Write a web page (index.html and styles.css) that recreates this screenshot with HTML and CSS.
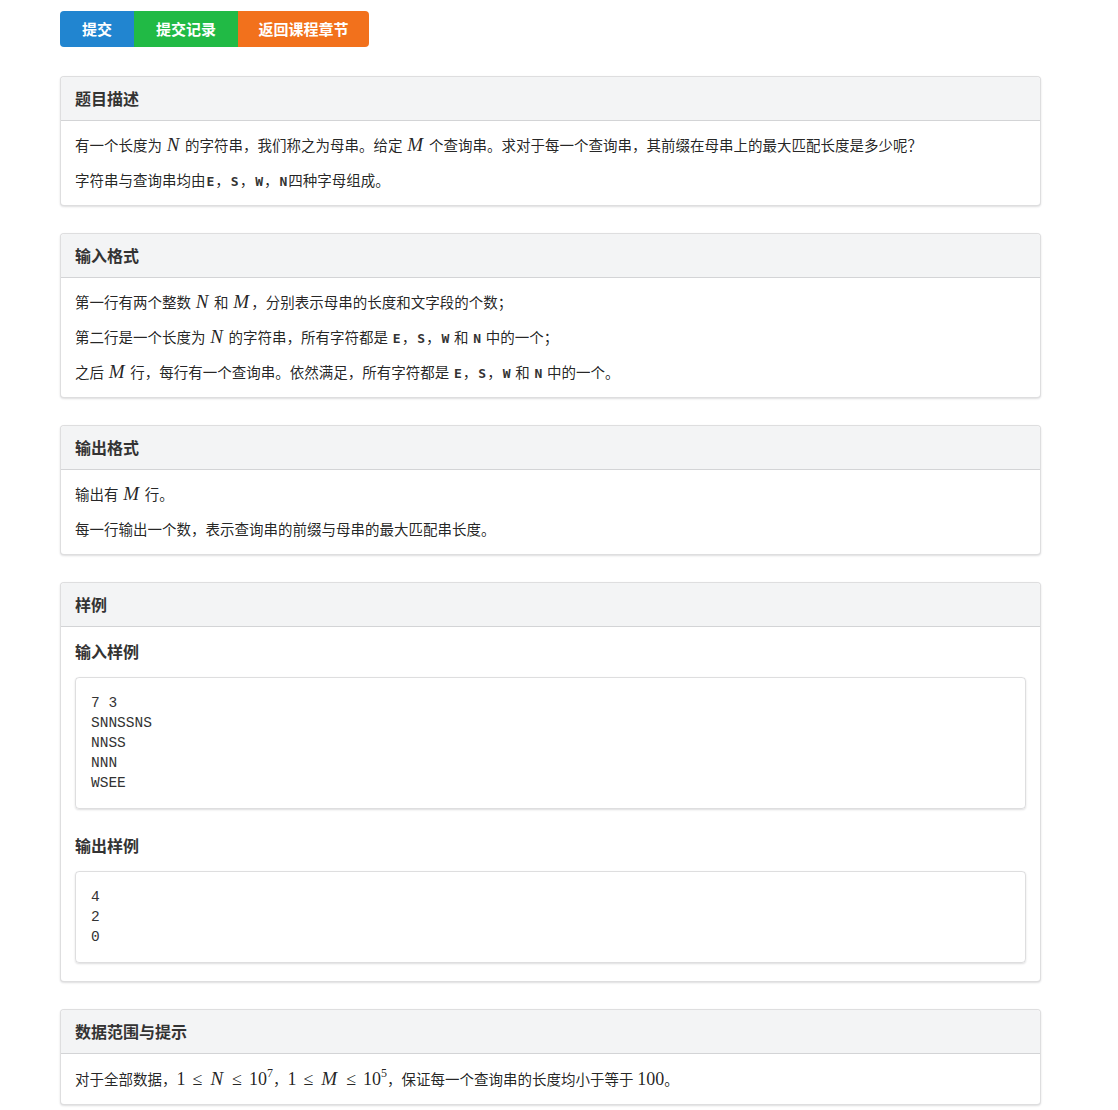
FILE: index.html
```html
<!DOCTYPE html>
<html lang="zh">
<head>
<meta charset="utf-8">
<title>题目</title>
<link rel="stylesheet" href="styles.css">
</head>
<body>
<div class="page">
  <div class="btn-group">
    <a class="btn btn-blue">提交</a>
    <a class="btn btn-green">提交记录</a>
    <a class="btn btn-orange">返回课程章节</a>
  </div>

  <div class="card">
    <div class="card-head">题目描述</div>
    <div class="card-body">
      <p>有一个长度为 <span class="m">N</span> 的字符串，我们称之为母串。给定 <span class="m">M</span> 个查询串。求对于每一个查询串，其前缀在母串上的最大匹配长度是多少呢？</p>
      <p>字符串与查询串均由<code>E</code>，<code>S</code>，<code>W</code>，<code>N</code>四种字母组成。</p>
    </div>
  </div>

  <div class="card">
    <div class="card-head">输入格式</div>
    <div class="card-body">
      <p>第一行有两个整数 <span class="m">N</span> 和 <span class="m">M</span>，分别表示母串的长度和文字段的个数；</p>
      <p>第二行是一个长度为 <span class="m">N</span> 的字符串，所有字符都是 <code>E</code>，<code>S</code>，<code>W</code> 和 <code>N</code> 中的一个；</p>
      <p>之后 <span class="m">M</span> 行，每行有一个查询串。依然满足，所有字符都是 <code>E</code>，<code>S</code>，<code>W</code> 和 <code>N</code> 中的一个。</p>
    </div>
  </div>

  <div class="card">
    <div class="card-head">输出格式</div>
    <div class="card-body">
      <p>输出有 <span class="m">M</span> 行。</p>
      <p>每一行输出一个数，表示查询串的前缀与母串的最大匹配串长度。</p>
    </div>
  </div>

  <div class="card">
    <div class="card-head">样例</div>
    <div class="card-body sample">
      <h4 class="sample-title">输入样例</h4>
      <pre class="sample-box">7 3
SNNSSNS
NNSS
NNN
WSEE</pre>
      <h4 class="sample-title">输出样例</h4>
      <pre class="sample-box">4
2
0</pre>
    </div>
  </div>

  <div class="card">
    <div class="card-head">数据范围与提示</div>
    <div class="card-body tall">
      <p>对于全部数据，<span class="r">1</span><span class="r rel">≤</span><span class="m">N</span><span class="r rel">≤</span><span class="r">10<sup>7</sup></span>，<span class="r">1</span><span class="r rel">≤</span><span class="m">M</span><span class="r rel">≤</span><span class="r">10<sup>5</sup></span>，保证每一个查询串的长度均小于等于 <span class="r">100</span>。</p>
    </div>
  </div>
</div>
</body>
</html>
```

FILE: styles.css
```css
html, body {
  margin: 0;
  padding: 0;
  background: #ffffff;
}

body {
  font-family: "Lato", "Noto Sans CJK SC", sans-serif;
  font-size: 14.5px;
  color: rgba(0, 0, 0, 0.87);
}

.page {
  width: 981px;
  margin-left: 60px;
  padding-top: 11px;
}

.btn-group {
  display: inline-flex;
  border-radius: 4px;
  overflow: hidden;
  margin-bottom: 29px;
}

.btn {
  display: block;
  height: 36px;
  line-height: 36px;
  padding: 0 22px;
  font-size: 15px;
  font-weight: bold;
  color: #ffffff;
  text-decoration: none;
}

.btn-blue { background: #2185d0; }
.btn-green { background: #21ba45; }
.btn-orange { background: #f2711c; padding: 0 20.5px; }

.card {
  border: 1px solid rgba(34, 36, 38, 0.15);
  border-radius: 4px;
  box-shadow: 0 1px 2px 0 rgba(34, 36, 38, 0.15);
  margin-bottom: 27px;
  background: #ffffff;
}

.card-head {
  background: #f3f4f5;
  border-bottom: 1px solid rgba(34, 36, 38, 0.15);
  border-radius: 4px 4px 0 0;
  padding: 10px 14px 9px;
  line-height: 24px;
  font-size: 16px;
  font-weight: bold;
  color: #333333;
}

.card-body {
  padding: 13px 14px 12px;
}

.card-body p {
  margin: 0 0 11px;
  line-height: 24px;
}

.card-body p:last-child {
  margin-bottom: 0;
}

.m {
  font-family: "Liberation Serif", "DejaVu Serif", serif;
  font-style: italic;
  font-size: 19px;
  line-height: 1;
  margin: 0 2px 0 1px;
}

.r {
  font-family: "Liberation Serif", "DejaVu Serif", serif;
  font-size: 18px;
  line-height: 1;
}

.rel {
  margin: 0 7px;
}

.r sup {
  font-size: 12px;
  vertical-align: 8px;
  line-height: 0;
}

code {
  font-family: "DejaVu Sans Mono", monospace;
  font-weight: bold;
  font-size: 13px;
  line-height: 1;
  color: #333333;
  padding: 0 1px;
}

.tall {
  padding-top: 14px;
}

.sample {
  padding-top: 13px;
  padding-bottom: 18px;
}

.sample-title {
  margin: 0 0 13px;
  font-size: 16px;
  line-height: 24px;
  font-weight: bold;
  color: #333333;
}

.sample-box {
  margin: 0 0 25px;
  padding: 15px 15px 15px;
  border: 1px solid rgba(34, 36, 38, 0.15);
  border-radius: 4px;
  box-shadow: 0 1px 2px 0 rgba(34, 36, 38, 0.15);
  font-family: "Liberation Mono", "DejaVu Sans Mono", monospace;
  font-size: 14.5px;
  line-height: 20px;
  color: #333333;
}

.sample-box:last-child {
  margin-bottom: 0;
}
```
